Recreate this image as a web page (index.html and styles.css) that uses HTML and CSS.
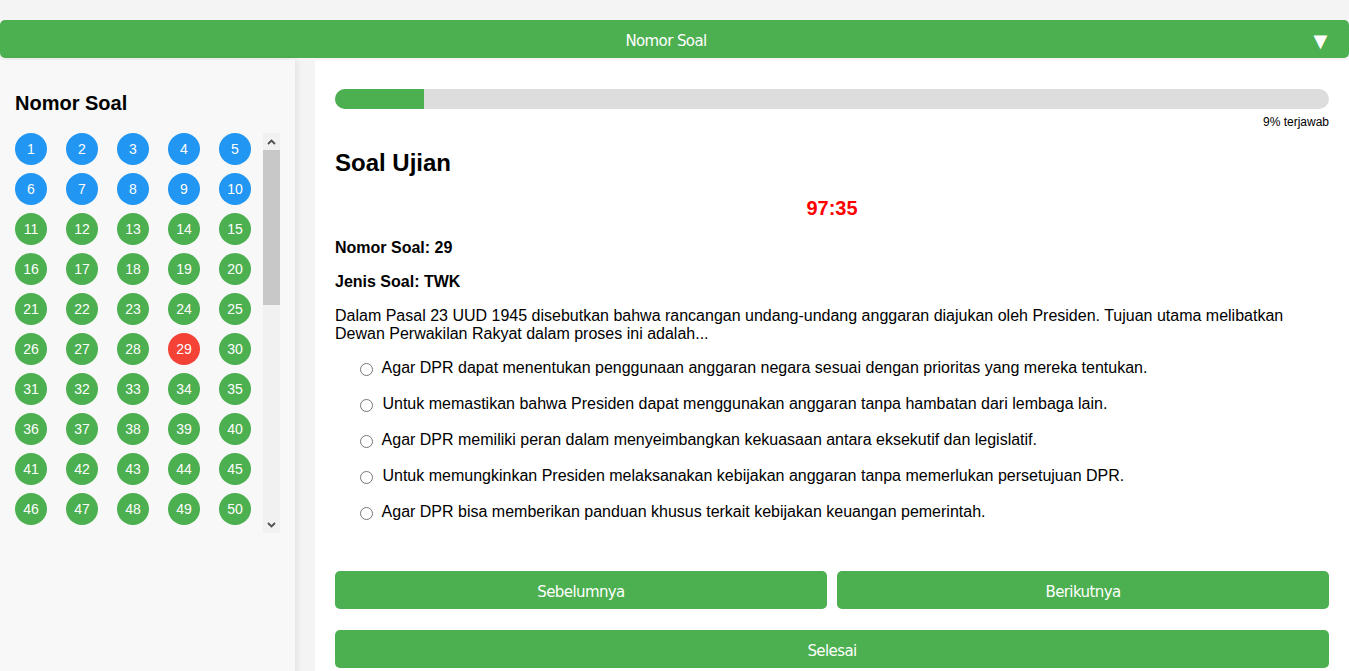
FILE: index.html
```html
<!DOCTYPE html>
<html lang="id">
  <head>
    <meta charset="UTF-8" />
    <meta name="viewport" content="width=device-width, initial-scale=1.0" />
    <title>Soal Ujian</title>
    <link rel="stylesheet" href="styles.css">
  </head>
  <body>
    <!-- Toggle nomor soal (mobile style) -->
    <div class="nav-toggle">
      <span class="nav-toggle-text">Nomor Soal</span>
      <span class="nav-toggle-arrow">&#9660;</span>
    </div>

    <div class="layout">
      <aside class="sidebar">
        <h3>Nomor Soal</h3>
        <div class="grid-wrap">
          <div class="number-grid" id="number-grid"></div>
          <!-- scrollbar look-alike -->
          <div class="scrollbar">
            <div class="sb-btn">
              <svg width="9" height="6" viewBox="0 0 9 6"><path d="M1 5l3.5-3.5L8 5" fill="none" stroke="#505050" stroke-width="1.8"/></svg>
            </div>
            <div class="sb-thumb"></div>
            <div class="sb-track"></div>
            <div class="sb-btn">
              <svg width="9" height="6" viewBox="0 0 9 6"><path d="M1 1l3.5 3.5L8 1" fill="none" stroke="#505050" stroke-width="1.8"/></svg>
            </div>
          </div>
        </div>
      </aside>

      <main class="content">
        <div class="progress">
          <div class="progress-fill" style="width: 9%;"></div>
        </div>
        <div class="progress-label">9% terjawab</div>

        <h2>Soal Ujian</h2>
        <div class="timer">97:35</div>

        <p class="meta">Nomor Soal: 29</p>
        <p class="meta">Jenis Soal: TWK</p>

        <p class="question">Dalam Pasal 23 UUD 1945 disebutkan bahwa rancangan undang-undang anggaran diajukan oleh Presiden. Tujuan utama melibatkan Dewan Perwakilan Rakyat dalam proses ini adalah...</p>

        <div class="options">
          <label class="option"><input type="radio" name="jawaban"> Agar DPR dapat menentukan penggunaan anggaran negara sesuai dengan prioritas yang mereka tentukan.</label>
          <label class="option"><input type="radio" name="jawaban"> Untuk memastikan bahwa Presiden dapat menggunakan anggaran tanpa hambatan dari lembaga lain.</label>
          <label class="option"><input type="radio" name="jawaban"> Agar DPR memiliki peran dalam menyeimbangkan kekuasaan antara eksekutif dan legislatif.</label>
          <label class="option"><input type="radio" name="jawaban"> Untuk memungkinkan Presiden melaksanakan kebijakan anggaran tanpa memerlukan persetujuan DPR.</label>
          <label class="option"><input type="radio" name="jawaban"> Agar DPR bisa memberikan panduan khusus terkait kebijakan keuangan pemerintah.</label>
        </div>

        <div class="nav-buttons">
          <button class="btn">Sebelumnya</button>
          <button class="btn">Berikutnya</button>
        </div>
        <button class="btn btn-full">Selesai</button>
      </main>
    </div>

    <script>
      // Build the visible question number buttons
      const grid = document.getElementById('number-grid');
      for (let i = 1; i <= 50; i++) {
        const b = document.createElement('div');
        b.className = 'num';
        if (i <= 10) b.classList.add('num-answered');
        else if (i === 29) b.classList.add('num-current');
        else b.classList.add('num-done');
        b.textContent = i;
        grid.appendChild(b);
      }
    </script>
  </body>
</html>
```

FILE: styles.css
```css
body {
  margin: 0;
  background: #f4f4f4;
  font-family: "Liberation Sans", Arial, sans-serif;
  color: #000;
}
.nav-toggle {
  display: flex;
  align-items: center;
  box-sizing: border-box;
  margin-top: 20px;
  height: 38px;
  padding: 3px 20px 0;
  background: #4caf50;
  color: #fff;
  border-radius: 5px;
  font-family: "DejaVu Sans", sans-serif;
  font-size: 15px;
  letter-spacing: -0.6px;
}
.nav-toggle-text {
  flex: 1;
  text-align: center;
}
.nav-toggle-arrow {
  width: 17px;
  font-size: 18px;
  text-align: center;
  letter-spacing: 0;
}
.layout {
  display: flex;
  margin-top: 2px;
  min-height: 620px;
}
.sidebar {
  width: 265px;
  padding: 15px;
  background: #f8f8f8;
  box-shadow: 2px 0 6px rgba(0, 0, 0, 0.08);
}
.sidebar h3 {
  margin: 17px 0 18px;
  font-size: 20px;
}
.grid-wrap {
  display: flex;
  height: 400px;
  overflow: hidden;
}
.number-grid {
  flex: 1;
  display: grid;
  grid-template-columns: repeat(5, 32px);
  grid-auto-rows: 32px;
  column-gap: 19px;
  row-gap: 8px;
  align-content: start;
}
.scrollbar {
  display: flex;
  flex-direction: column;
  width: 17px;
  background: #f1f1f1;
}
.sb-btn {
  display: flex;
  align-items: center;
  justify-content: center;
  height: 17px;
}
.sb-thumb {
  height: 155px;
  background: #c8c8c8;
}
.sb-track {
  flex: 1;
}
.num {
  width: 32px;
  height: 32px;
  border-radius: 50%;
  color: #fff;
  font-size: 14px;
  line-height: 32px;
  text-align: center;
}
.num-answered {
  background: #2196f3;
}
.num-done {
  background: #4caf50;
}
.num-current {
  background: #f44336;
}
.content {
  flex: 1;
  margin-left: 20px;
  padding: 29px 20px 20px;
  background: #fff;
}
.progress {
  height: 20px;
  background: #ddd;
  border-radius: 10px;
  overflow: hidden;
}
.progress-fill {
  height: 100%;
  background: #4caf50;
}
.progress-label {
  margin-top: 6px;
  font-size: 12px;
  text-align: right;
}
.content h2 {
  margin: 20px 0;
  font-size: 24px;
}
.timer {
  margin-bottom: 19px;
  color: #ff0000;
  font-size: 20px;
  font-weight: bold;
  text-align: center;
}
.meta {
  margin: 16px 0;
  font-weight: bold;
}
.question {
  margin: 16px 0;
  line-height: 18px;
}
.options {
  display: flex;
  flex-direction: column;
  gap: 18px;
  margin-left: 20px;
}
.option {
  line-height: 18px;
}
.option input {
  margin: 0 5px 0 5px;
  width: 13px;
  height: 13px;
  vertical-align: -3px;
}
.nav-buttons {
  display: flex;
  gap: 10px;
  margin-top: 50px;
}
.btn {
  flex: 1;
  height: 38px;
  padding: 3px 0 0;
  border: none;
  border-radius: 5px;
  background: #4caf50;
  color: #fff;
  font-family: "DejaVu Sans", sans-serif;
  font-size: 15px;
  letter-spacing: -0.6px;
}
.btn-full {
  display: block;
  width: 100%;
  margin-top: 21px;
}
```
